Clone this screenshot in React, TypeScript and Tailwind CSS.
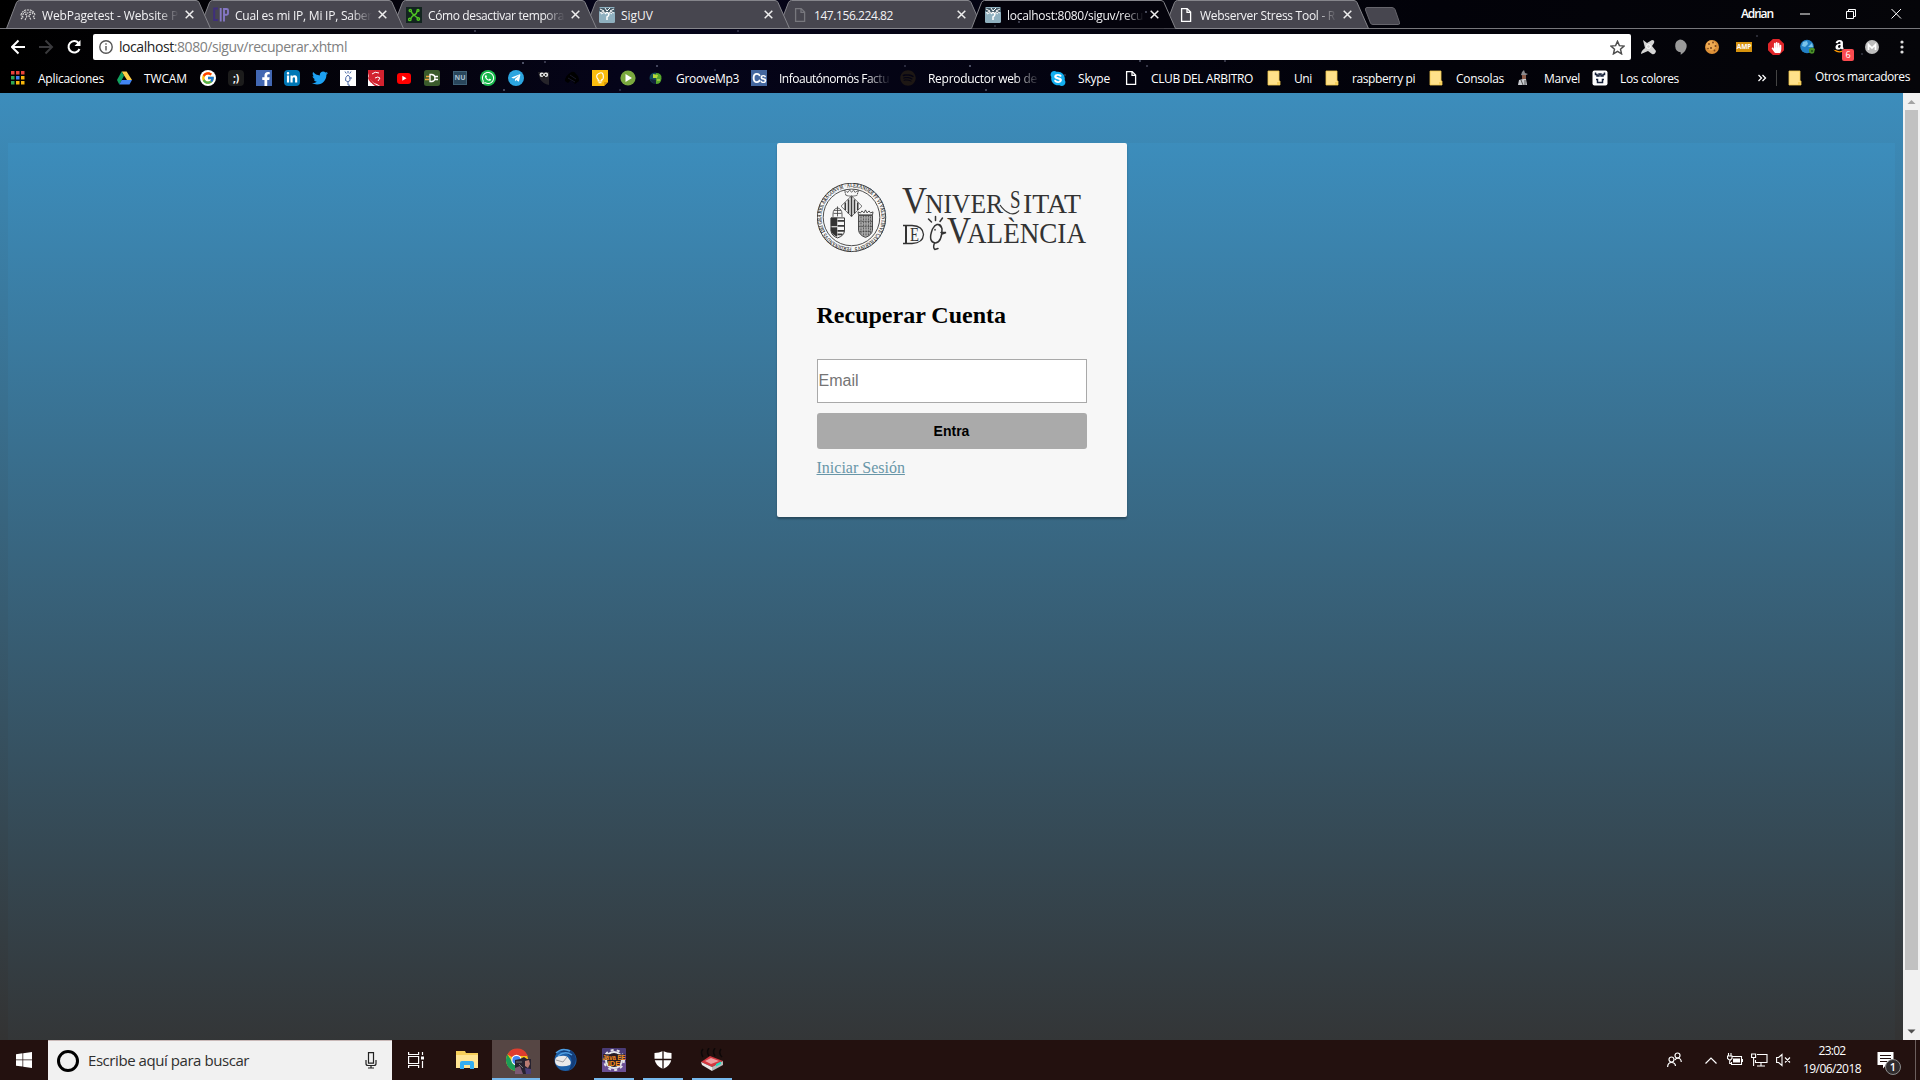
import React, { useLayoutEffect, useRef, useState } from "react";
import { FaFacebookF, FaLinkedinIn, FaTwitter, FaWhatsapp, FaTelegramPlane, FaSkype, FaHandPaper, FaAmazon, FaSpotify } from "react-icons/fa";
import { FcGoogle } from "react-icons/fc";

/* Text set to a known advance width by adjusting its tracking. */
function Fit({ w, className = "", children }: { w: number; className?: string; children: React.ReactNode }) {
  const ref = useRef<HTMLSpanElement>(null);
  const [ls, setLs] = useState(0);
  useLayoutEffect(() => {
    const el = ref.current;
    if (el && el.textContent) setLs((w - el.getBoundingClientRect().width) / el.textContent.length);
  }, [w]);
  return (
    <span ref={ref} className={"inline-block shrink-0 whitespace-pre " + className} style={{ letterSpacing: ls }}>
      {children}
    </span>
  );
}

const Page = ({ c = "#fff" }: { c?: string }) => (
  <svg width="16" height="16" viewBox="0 0 16 16" fill="none" stroke={c} strokeWidth="1.3">
    <path d="M3.6 1.6h5.6l3.4 3.5v9.3h-9z M9 1.8v3.6h3.5" />
  </svg>
);
const Uv = () => (
  <svg width="16" height="16" viewBox="0 0 16 16">
    <rect width="16" height="16" rx="1.5" fill="#8fb0bf" />
    <path d="M0 1h16v4l-4 1H3L0 4z" fill="#455b68" />
    <path d="M1 2l4 2-4 2M6 1l2 3 3-3M15 2l-4 2 4 2M2 7l4-2M13 7l-3-2" stroke="#fff" strokeWidth="1" fill="none" />
    <path d="M6 7q2-3 4 0-.2 2-2 3v3" stroke="#fff" strokeWidth="1.5" fill="none" />
  </svg>
);
const Folder = () => (
  <svg width="16" height="16" viewBox="0 0 16 16">
    <path d="M2 1h11v10h1v4H2z" fill="#ffe18a" />
    <path d="M2 1h11v10h1v4H2z" fill="none" stroke="#efc54c" strokeWidth=".8" />
    <path d="M11 15v-3h3v3z" fill="#f6cf5c" />
  </svg>
);

const TAB_ICONS = [
  <svg key="w" width="16" height="16" viewBox="0 0 16 16" fill="none" stroke="#ddd" strokeWidth="1.1" strokeDasharray="2 .8">
    <path d="M1 12l2-2-2-2q1-4 5-5h4q4 1 5 5l-2 2 2 2M3 8q0-3 3-3 1 2 4 0 3 0 3 3M5 13l2-4h2l2 4M5 7l2 1M11 7L9 8" />
  </svg>,
  <svg key="ip" width="16" height="16" viewBox="0 0 16 16" fill="none">
    <path d="M5 1.5H1.2v11.5H5" stroke="#3f2f7c" strokeWidth="2" />
    <path d="M7.7 1v13.5M11 14.5V2h2.7q1.3 0 1.3 1.3v3q0 1.5-1.3 1.5H11" stroke="#8577c4" strokeWidth="1.9" />
  </svg>,
  <svg key="g" width="16" height="16" viewBox="0 0 16 16" fill="none" stroke="#4fc323" strokeWidth="1.400">
    <rect width="16" height="16" fill="#12241f" stroke="none" />
    <path d="M5 4q1 3 3 4 3-1 3-4M8 8q-2 1-3.500 4M8 8q2 2 4 3" />
    <circle cx="4.300" cy="3.500" r="1.100" /><circle cx="12" cy="3.400" r="1" /><circle cx="3.800" cy="12.400" r="1.200" /><circle cx="12.300" cy="12" r="1.200" />
  </svg>,
  <Uv key="u" />,
  <Page key="p" c="#77777d" />,
  <Uv key="u2" />,
  <Page key="p2" />,
];
const TABS: [string, number][] = [
  ["WebPagetest - Website P", 136],
  ["Cual es mi IP, Mi IP, Saber", 137],
  ["Cómo desactivar tempora", 136],
  ["SigUV", 32],
  ["147.156.224.82", 79],
  ["localhost:8080/siguv/recu", 136],
  ["Webserver Stress Tool - R", 135],
];
const Z = ["z-[7]", "z-[6]", "z-[5]", "z-[4]", "z-[3]", "z-[9]", "z-[1]"];

function Tab({ i }: { i: number }) {
  const active = i === 5;
  const long = TABS[i][1] > 100;
  return (
    <div className={"relative -mr-3 h-[29px] w-[205px] shrink-0 " + Z[i]}>
      <svg className="absolute inset-0" width="205" height="29" viewBox="0 0 205 29">
        <path d="M.5 28.500L10.500 2.500Q11.500.5 13.500.5H190Q192 .5 193 2.500L204.500 28.500" fill={active ? "#04030c" : "#47464f"} stroke="#85858b" />
        {!active && <path d="M0 28.500h205" stroke="#85858b" />}
      </svg>
      <div className="relative flex h-[29px] items-center pb-px pl-3.5">
        <span className="mt-px w-4 shrink-0">{TAB_ICONS[i]}</span>
        <div className={"mb-px ml-1.5 w-[137px] shrink-0 " + (long ? "[mask-image:linear-gradient(90deg,#000_116px,transparent_137px)]" : "")}>
          <Fit w={TABS[i][1]} className="text-[12px] leading-4 text-[#f2f2f4]">{TABS[i][0]}</Fit>
        </div>
        <svg className="ml-1.5 mt-px shrink-0" width="9" height="9" viewBox="0 0 9 9" stroke="#eee" strokeWidth="1.500"><path d="M.7.7l7.600 7.600M8.300.7L.7 8.300" /></svg>
      </div>
    </div>
  );
}

const sq = "flex h-4 w-4 items-center justify-center overflow-hidden ";
const BOOKMARKS: { s: string; icon: React.ReactNode; t?: string; w?: number; fade?: boolean }[] = [
  { s: "w-[106px]", t: "Aplicaciones", w: 66, icon: (
    <svg width="16" height="16" viewBox="0 0 16 16">
      {["#e8433a", "#e8433a", "#e8433a", "#30a552", "#3f80ef", "#f5b50b", "#30a552", "#f5b50b", "#f5b50b"].map((c, i) => (
        <rect key={i} x={1 + (i % 3) * 5} y={1 + Math.floor(i / 3) * 5} width="3.500" height="3.500" fill={c} />
      ))}
    </svg>) },
  { s: "w-[84px]", t: "TWCAM", w: 43, icon: (
    <svg width="16" height="16" viewBox="0 0 16 16"><path d="M5.600 1.500h5L16 10h-5z" fill="#ffcf48" /><path d="M5.600 1.500L8 5.800 3.300 14.500 1 10z" fill="#12a15e" /><path d="M5.700 10H16l-2.500 4.500H3.300z" fill="#4285f4" /></svg>) },
  { s: "w-7", icon: <span className="flex h-4 w-4 items-center justify-center rounded-full bg-white"><FcGoogle size={14} /></span> },
  { s: "w-7", icon: <span className={sq + "rounded bg-[#1c1c1c] text-[10px] font-bold text-white"}>;)</span> },
  { s: "w-7", icon: <span className={sq + "items-end bg-[#4267b2] pl-1"}><FaFacebookF size={14} className="mt-1" color="#fff" /></span> },
  { s: "w-7", icon: <span className={sq + "rounded-sm bg-[#0077b5]"}><FaLinkedinIn size={12} color="#fff" /></span> },
  { s: "w-7", icon: <FaTwitter size={16} color="#1da1f2" /> },
  { s: "w-7", icon: (
    <svg width="16" height="16" viewBox="0 0 16 16" fill="none" stroke="#4a68a5"><rect width="16" height="16" fill="#fff" stroke="none" /><path d="M8 5q-3 2-2.500 5.500Q8 13 10 10.500 11 7 8 5zM8 12v3l2 .3M5 1.500l1.300 2M8 1v2.300M11 1.500L9.700 3.500M9 8h3" /></svg>) },
  { s: "w-7", icon: (
    <svg width="16" height="16" viewBox="0 0 16 16" fill="none"><rect width="16" height="16" fill="#d3222f" /><path d="M0 3q1 9 9 11l3 2H0z" fill="#fff" /><path d="M1 6q3 8 10 10H7Q1 12 0 8z" fill="#d3222f" /><path d="M4 4q3-3 7-1M7 8q3-2 5 0l-2 3M3 13l2 3" stroke="#fff" strokeWidth="1" /></svg>) },
  { s: "w-7", icon: (
    <svg width="16" height="16" viewBox="0 0 16 16"><rect x="1" y="3" width="14" height="11" rx="3" fill="#f00" /><path d="M6.300 5.700v5l4.200-2.500z" fill="#fff" /></svg>) },
  { s: "w-7", icon: (
    <svg width="16" height="16" viewBox="0 0 16 16" fill="none"><rect width="16" height="16" rx="2.500" fill="#3a5a2b" /><path d="M2 6.500h4M1 9.500h4" stroke="#e9a33a" strokeWidth="1.500" /><path d="M6 4.500h2q3 .5 3 3.500t-3 3.500H6zM10 6.500h4M10 9.500h4" stroke="#fff" strokeWidth="1.300" /></svg>) },
  { s: "w-7", icon: <span className="flex h-3.5 w-3.5 items-center justify-center border border-[#3f6177] bg-[#29465c] text-[7px] font-bold text-[#a9c0d0]">NU</span> },
  { s: "w-7", icon: <span className={sq + "rounded-full bg-[#18b84c]"}><FaWhatsapp size={14} color="#fff" /></span> },
  { s: "w-7", icon: <span className={sq + "rounded-full bg-[#2ca5e0]"}><FaTelegramPlane size={10} color="#fff" /></span> },
  { s: "w-7", icon: (
    <svg width="16" height="16" viewBox="0 0 16 16"><path d="M2 2h11v13q-6-1-9-6z" fill="#26242a" /><circle cx="5.800" cy="4.800" r="2.200" fill="#e9e9e9" /><circle cx="10" cy="4.800" r="2.200" fill="#e9e9e9" /><circle cx="6.200" cy="4.800" r=".9" /><circle cx="9.700" cy="4.800" r=".9" /><path d="M7 6h2l-1 2.500z" fill="#111" /></svg>) },
  { s: "w-7", icon: (
    <svg width="16" height="16" viewBox="0 0 16 16"><path d="M1 11q0-5 5-8 4-3 6 1 3 2 3 7l-4 3-4-4-3 3z" fill="#000" /><path d="M4 8l7 4M6 5l6 4" stroke="#18182a" /></svg>) },
  { s: "w-7", icon: (
    <svg width="16" height="16" viewBox="0 0 16 16" fill="none"><path d="M0 0h16v12l-4 4H0z" fill="#fbbc0d" /><path d="M12 16v-4h4z" fill="#dd9b09" /><path d="M6.200 9.500Q4.500 8 4.700 6T8 3t3.300 3T9.800 9.500V11H6.200zM6.500 12.800h3" stroke="#fff" strokeWidth="1.100" /></svg>) },
  { s: "w-7", icon: (
    <svg width="16" height="16" viewBox="0 0 16 16"><circle cx="8" cy="8" r="7.600" fill="#7aa83e" /><path d="M5.500 4v8l6.500-4z" fill="#fff" /></svg>) },
  { s: "w-[103px]", t: "GrooveMp3", w: 63, icon: (
    <svg width="16" height="16" viewBox="0 0 16 16"><circle cx="7" cy="8" r="5.500" fill="#134a5b" /><path d="M8 3q6 0 5.500 5.500T8 14z" fill="#55a52b" /><path d="M5 4l5 1-1 3-4 0z" fill="#b7d93a" /><path d="M9 10h3" stroke="#d9e45a" /><path d="M2 9q2 5 6 5V10z" fill="#13223c" /></svg>) },
  { s: "w-[149px]", t: "Infoautónomos Factu", w: 110, fade: true, icon: <span className={sq + "bg-[#44679f] font-['Liberation_Sans'] text-[12px] font-bold tracking-[-1px] text-white"}><span className="scale-y-125">Cs</span></span> },
  { s: "w-[150px]", t: "Reproductor web de", w: 109, fade: true, icon: <FaSpotify size={16} color="#1d1714" /> },
  { s: "w-[73px]", t: "Skype", w: 32, icon: <FaSkype size={17} color="#13aff0" className="[background:radial-gradient(#fff_50%,transparent_52%)]" /> },
  { s: "w-[143px]", t: "CLUB DEL ARBITRO", w: 102, icon: <Page /> },
  { s: "w-[58px]", t: "Uni", w: 18, icon: <Folder /> },
  { s: "w-[104px]", t: "raspberry pi", w: 63, icon: <Folder /> },
  { s: "w-[88px]", t: "Consolas", w: 48, icon: <Folder /> },
  { s: "w-[76px]", t: "Marvel", w: 36, icon: (
    <svg width="16" height="16" viewBox="0 0 16 16"><path d="M6 2l2-2 1 3 3 1-4 2-3-1z" fill="#8b8b8f" /><path d="M6 5h4v4H6z" fill="#8a5a48" /><path d="M2 15l1-5 4-1h3l1 6z" fill="#c9cbd0" /><path d="M5 10l2 5M9 10v5" stroke="#555" /></svg>) },
  { s: "w-[164px]", t: "Los colores", w: 59, icon: (
    <svg width="16" height="16" viewBox="0 0 16 16" fill="none"><rect x=".5" y=".5" width="15" height="15" rx="2" fill="#fff" /><path d="M3.500 2.500v2h1.500v1.500h2V4h2v2h2V4.500h1.500v-2M4 9.500h1.500v3h5v-3H12" stroke="#16213a" strokeWidth="1.500" /></svg>) },
];

const stars: [number, number, number][] = [[475, 31, .4], [523, 63, .6], [545, 62, .4], [504, 90, .5], [657, 66, .5], [620, 90, .3], [970, 66, .6], [1021, 24, .4], [986, 90, .5], [1140, 61, .5], [1225, 61, .4], [1147, 66, .4], [738, 31, .3], [1862, 54, .3], [1757, 36, .3], [850, 74, .4], [905, 66, .3], [715, 70, .3], [1065, 75, .3]];
const tabStars: [number, number, number][] = [[1019, 22, .5], [1146, 12, .6], [1010, 19, .3], [995, 26, .3], [1120, 20, .3]];

const Ext = () => (
  <div className="flex items-center gap-4">
    <svg width="16" height="16" viewBox="0 0 16 16"><path d="M3 1l4 3 5-3q3 0 2 3l-2 3 4 5q-1 4-4 3l-4-3-7 3q0-3 4-6z" fill="#d4d4d4" /><circle cx="8.500" cy="7.500" r="2" fill="none" stroke="#fff" /></svg>
    <svg width="16" height="16" viewBox="0 0 16 16"><path d="M8 .5a6.700 6.700 0 0 1 6.700 6.500q0 5-6 8.700v-2.500A6.500 6.500 0 0 1 8 .5z" fill="#9a9a9a" /></svg>
    <svg width="16" height="16" viewBox="0 0 16 16"><circle cx="8" cy="8" r="7" fill="#dd9138" /><circle cx="7" cy="6.500" r="5" fill="#efaa52" /><g fill="#7a431a"><circle cx="5" cy="5" r=".9" /><circle cx="9" cy="3.500" r=".9" /><circle cx="11.500" cy="7" r="1" /><circle cx="7" cy="9" r="1" /><circle cx="10.500" cy="11.500" r=".9" /><circle cx="4" cy="9.500" r=".8" /></g></svg>
    <span className="flex h-[10px] w-4 items-center justify-center bg-[#d7930d] text-[6.5px] font-bold text-white">AMP</span>
    <span className="flex h-4 w-4 items-center justify-center bg-[#e02529] [clip-path:polygon(30%_0,70%_0,100%_30%,100%_70%,70%_100%,30%_100%,0_70%,0_30%)]"><FaHandPaper size={11} color="#fff" /></span>
    <svg width="16" height="16" viewBox="0 0 16 16"><circle cx="7" cy="7.500" r="6.800" fill="#2280c4" /><path d="M3 3l4-1 1 3-3 3-3-1zM8 8l4-4 1 4z" fill="#79c3ea" /><path d="M9 10q3-3 6 0l-1 4q-3 2-5-1z" fill="#4b9129" /><path d="M11 12h2" stroke="#1c4b12" strokeWidth="1.500" /></svg>
    <span className="relative h-4 w-4">
      <FaAmazon size={15} color="#fff" className="[clip-path:inset(0_0_28%_0)]" />
      <svg className="absolute left-0.5 top-[11px]" width="12" height="4" viewBox="0 0 12 4" fill="none" stroke="#ff9900" strokeWidth="1.300"><path d="M.5 0q4 3 8 1" /></svg>
      <span className="absolute left-[10px] top-[10px] flex h-3 w-3 items-center justify-center rounded-[2px] bg-[#fb4b50] text-[9px] text-white">6</span>
    </span>
    <svg width="16" height="16" viewBox="0 0 16 16" fill="none"><circle cx="8" cy="8" r="7" fill="#bdbdbd" /><path d="M4.500 11V5.500L8 9l3.500-3.500V11" stroke="#fff" strokeWidth="1.700" /></svg>
  </div>
);

function Seal() {
  return (
    <g fill="none" stroke="#3b3b3b" transform="translate(-.5 -.6)">
      <defs><path id="ring" d="M35 65.200a30.200 30.200 0 1 1 .1 0" /></defs>
      <circle cx="35" cy="35" r="34.200" strokeWidth=".9" />
      <circle cx="35" cy="35" r="28.300" strokeWidth=".9" />
      <text fontSize="6" fontFamily="Liberation Serif" fill="#222" stroke="#222" strokeWidth=".12">
        <textPath href="#ring" textLength="186" lengthAdjust="spacingAndGlyphs">FERDINANDVS DEI GRA REX ARAGONVM · ALEXANDER PP VI VALENTINVS CATHARINVS</textPath>
      </text>
      <path d="M35 13.500l10.500 10.300L35 34 24.500 23.800z" strokeWidth=".7" />
      <path d="M32 17v14M35 14v20M38 17v14M28.800 20v7.500M41.200 20v7.500" strokeWidth="1.600" />
      <path d="M29.500 13L28 8l3.500 2L33 7.500l2 2.500 2-2.500 1.500 2.500L42 8l-1.500 5q-5.500 1.500-11 0z" strokeWidth=".9" strokeDasharray="1.500 .5" />
      <path d="M14.500 35.500h13.500v13q-.5 5-7 7-6-2-6.500-7z" strokeWidth="1" />
      <path d="M14.500 35.500h6v8h-6zM14.500 45h6v9q-5-2-6-6z" fill="#333" strokeWidth=".5" />
      <path d="M21 38.500h6.500M21 43.500h6.500M21 48.500h6.500M21 52h5" strokeWidth="1.800" />
      <path d="M16.500 34.500v-3q0-5 4.500-6 4.500 1 4.500 6v3M17 31h8M17.500 28h7M21 24v10" strokeWidth=".8" />
      <path d="M42 33h14v15q-1 5-7 7-6-2-7-7z" strokeWidth=".9" fill="#a8a8a8" />
      <path d="M44.500 34v18M47 33v21M49.500 33v21M52 33v21M54 34v18M42 39h14M42 44h14M43 49h12" strokeWidth=".7" strokeDasharray="2 1" />
      <path d="M42 32.500l-.5-3 2.500 1 1.500-2 2 2 1.500-3 1.500 3 2-2 1.500 2 2.500-1-.5 3z" strokeWidth=".9" />
    </g>
  );
}

function Logo() {
  const t = (x: number, y: number, s: number, w: number, txt: string) => (
    <text x={x} y={y} fontSize={s} textLength={w} lengthAdjust="spacingAndGlyphs">{txt}</text>
  );
  return (
    <svg width="270" height="70" viewBox="0 0 270 70" className="block">
      <Seal />
      <g fontFamily="Liberation Serif" fill="#333">
        {t(85, 30.300, 37, 25, "V")}
        {t(108, 30.300, 28, 78, "NIVER")}
        <path d="M183 22q4 6 10 8.500 6 1.500 9-3" fill="none" stroke="#333" strokeWidth="1.200" />
        {t(193, 25, 25, 10.500, "S")}
        {t(206, 30.300, 28, 58, "ITAT")}
        <path d="M86 42.500h9q11 .5 11.500 9-.5 8.500-11.500 9h-9" fill="none" stroke="#333" strokeWidth="1.300" />
        <path d="M89 42.500v18" stroke="#333" strokeWidth="2" />
        {t(93, 57.500, 18, 9, "E")}
        {t(130, 60.300, 37, 24, "V")}
        {t(150, 60.300, 28.500, 119, "ALÈNCIA")}
        <g fill="none" stroke="#333" strokeWidth="1.500" strokeLinecap="round">
          <path d="M124 44q-4-6-8.500 2-5 13 3 14 6.500-1 6.500-14-1-5-4-4.500M124 49.500h5l-4 1.500M117.500 60q-2 5 .5 6.500l3-1" />
          <path d="M118.500 33.500v4M111.500 36l3 3M125.500 35l-2.500 3.500M118 46.500v.5" />
        </g>
      </g>
    </svg>
  );
}

function TaskIcon({ on, hi, children }: { on?: boolean; hi?: boolean; children: React.ReactNode }) {
  return (
    <div className={"mr-px flex h-10 w-12 shrink-0 flex-col items-center justify-between " + (hi ? "bg-[#564644]" : "")}>
      <div className="flex h-[38px] items-center pt-0.5">{children}</div>
      {(on || hi) && <div className={"h-0.5 bg-[#76b9ed] " + (hi ? "w-12" : "w-10")} />}
    </div>
  );
}

export default function App() {
  return (
    <div className="flex h-[1080px] w-[1920px] flex-col overflow-hidden bg-black font-['Open_Sans','Noto_Sans',sans-serif]">
      <header className="relative h-[93px] shrink-0 bg-[linear-gradient(90deg,#000_0,#04030c_20%,#05041a_33%,#03030e_60%,#020209_75%,#050509_100%)]">
        <svg className="absolute inset-0" width="1920" height="93">
          {stars.map(([x, y, o], i) => <circle key={i} cx={x} cy={y} r="1" fill="#a9b0cc" opacity={o} />)}
        </svg>
        <div className="relative flex h-[29px] border-b border-[#77777b] pl-1.5">
          {TABS.map((_, i) => <Tab key={i} i={i} />)}
          <svg className="absolute inset-0 z-10" width="1400" height="28">
            {tabStars.map(([x, y, o], i) => <circle key={i} cx={x} cy={y} r=".9" fill="#a9b0cc" opacity={o} />)}
          </svg>
          <svg className="ml-[7px] mt-[7px] shrink-0" width="38" height="18" viewBox="0 0 38 18"><path d="M3 .5h25q2 0 3 2l4.500 13q.5 2-1 2H9q-2 0-2.500-1.500L1.500 3Q1 .5 3 .5z" fill="#47464f" stroke="#66656c" /></svg>
          <div className="ml-auto flex h-[28px] items-center">
            <Fit w={32} className="mr-[26px] text-[12px] font-semibold leading-4 text-white">Adrian</Fit>
            <svg className="-mr-px" width="122" height="12" viewBox="0 0 122 12" fill="none" stroke="#fff">
              <path d="M1 6h10M47.500 3.500h7v7h-7zM49.500 3.500v-2h7v7h-2M92.500 1l9.500 9.500M102 1l-9.500 9.500" />
            </svg>
          </div>
        </div>
        <div className="relative flex h-[36px] items-center pl-[11px]">
          <svg width="72" height="16" viewBox="0 0 72 16" fill="none" stroke="#fff" strokeWidth="2">
            <path d="M14 8H1.500M7.500 1.500L1 8l6.500 6.500" />
            <path d="M28 8h12.500M34.500 1.500L41 8l-6.500 6.500" stroke="#3a3a3d" />
            <path d="M67.500 4A5.700 5.700 0 1 0 68.500 10" /><path d="M69.500 1v6h-6z" fill="#fff" stroke="none" />
          </svg>
          <div className="ml-2.5 flex h-[26px] w-[1538px] items-center rounded-[2px] bg-white pl-1.5">
            <svg width="14" height="14" viewBox="0 0 14 14" fill="none" stroke="#555" strokeWidth="1.400"><circle cx="7" cy="7" r="6.200" /><path d="M7 6v4.500M7 3.300v1.500" /></svg>
            <Fit w={228} className="ml-1.5 text-[14px] leading-5 text-[#808080]"><span className="text-[#222]">localhost</span>:8080/siguv/recuperar.xhtml</Fit>
            <svg className="ml-auto mr-1.5" width="15" height="15" viewBox="0 0 24 24" fill="none" stroke="#4c4c4c" strokeWidth="2.300"><path d="M12 2l3 7 7.500.7-5.700 5 1.700 7.500L12 18.200l-6.500 4 1.700-7.500-5.700-5L9 9z" /></svg>
          </div>
          <div className="ml-[9px]"><Ext /></div>
          <svg className="ml-[20px]" width="4" height="14" viewBox="0 0 4 14" fill="#ddd"><circle cx="2" cy="2" r="1.600" /><circle cx="2" cy="7" r="1.600" /><circle cx="2" cy="12" r="1.600" /></svg>
        </div>
        <div className="relative flex h-[26px] items-center pl-2.5">
          {BOOKMARKS.map((b, i) => (
            <div key={i} className={"flex shrink-0 items-center " + b.s}>
              <span className="flex w-4 shrink-0 justify-center">{b.icon}</span>
              {b.t && (
                <div className={"mb-0.5 ml-3 " + (b.fade ? "w-[112px] shrink-0 [mask-image:linear-gradient(90deg,#000_86px,transparent_112px)]" : "")}>
                  <Fit w={b.w!} className="text-[12px] leading-4 text-white">{b.t}</Fit>
                </div>
              )}
            </div>
          ))}
          <svg width="10" height="8" viewBox="0 0 10 8" fill="none" stroke="#fff" strokeWidth="1.300" className="ml-px"><path d="M1.500 1l3 3-3 3M5.500 1l3 3-3 3" /></svg>
          <span className="ml-[9px] h-4 w-px bg-[#444]" />
          <span className="ml-2.5"><Folder /></span>
          <Fit w={95} className="mb-0.5 ml-3 text-[12px] leading-4 text-white">Otros marcadores</Fit>
        </div>
      </header>

      <div className="flex h-[947px] shrink-0">
        <main className="h-[947px] w-[1903px] overflow-hidden bg-[linear-gradient(#3c8dbc,#333)] px-2 pt-[50px]">
          <div className="h-[925px] bg-[linear-gradient(#3c8dbc,#333)]">
            <div className="mx-auto h-[374px] w-[350px] rounded-[2px] bg-[#f7f7f7] p-10 shadow-[0_2px_2px_rgba(0,0,0,0.3)]">
              <Logo />
              <h2 className="mt-[48px] font-['Liberation_Serif',serif] text-[24px] font-bold leading-7 text-black">Recuperar Cuenta</h2>
              <div className="mt-[30px] flex h-11 items-center border border-[#a9a9a9] bg-white pl-px font-['Liberation_Sans',sans-serif] text-[16px] leading-5 text-[#757575]">Email</div>
              <button className="mt-2.5 block h-9 w-full rounded-[3px] bg-[#aaa] font-['Liberation_Sans',sans-serif] text-[14px] font-bold text-black">Entra</button>
              <a className="mt-2.5 block font-['Liberation_Serif',serif] text-[16px] leading-[18px] text-[#6896a8] underline">Iniciar Sesión</a>
            </div>
          </div>
        </main>
        <aside className="flex w-[17px] flex-col items-center bg-[#f1f1f1]">
          <svg width="17" height="17" viewBox="0 0 17 17" fill="#a3a3a3"><path d="M8.500 7l4 4h-8z" /></svg>
          <div className="h-[860px] w-[13px] bg-[#c1c1c1]" />
          <svg className="mt-auto" width="17" height="17" viewBox="0 0 17 17" fill="#505050"><path d="M8.500 10.500l-4-4h8z" /></svg>
        </aside>
      </div>

      <footer className="flex h-10 shrink-0 bg-[#23110f] text-white">
        <div className="flex w-12 items-center justify-center">
          <svg width="16" height="16" viewBox="0 0 16 16" fill="#fff"><path d="M0 2.200l6.500-.9v6.300H0zM7.200 1.200L16 0v7.600H7.200zM0 8.300h6.500v6.300L0 13.700zM7.200 8.300H16V16l-8.800-1.200z" /></svg>
        </div>
        <div className="flex w-[344px] items-center border-t border-[#c9b9b8] bg-[#f1f1f1] pl-[9px] pr-3.5">
          <span className="h-[22px] w-[22px] rounded-full border-[3px] border-black" />
          <Fit w={161} className="mb-px ml-[9px] text-[15px] leading-5 text-[#2f2f2f]">Escribe aquí para buscar</Fit>
          <svg className="ml-auto mr-px" width="12" height="17" viewBox="0 0 12 17" fill="none" stroke="#222" strokeWidth="1.200"><path d="M3.500.6h5v10.500h-5zM1 8v3.500q0 2 2 2h6q2 0 2-2V8M6 13.500V16M3 16h6" /></svg>
        </div>
        <TaskIcon>
          <svg width="16" height="16" viewBox="0 0 16 16" fill="none" stroke="#fff" strokeWidth="1.200"><path d="M.6 0v2.500h10V0M.6 16v-2.500h10V16M.6 4.500h10v7H.6zM14.500 0v3M14.500 9v7" /><path d="M13 4.500h3v3h-3z" fill="#fff" stroke="none" /></svg>
        </TaskIcon>
        <div className="ml-0.5 flex">
        <TaskIcon>
          <svg width="22" height="20" viewBox="0 0 22 20"><path d="M0 1h9l1 2h12v15H0z" fill="#f6cf5a" /><path d="M0 5h22v13H0z" fill="#ffe593" /><path d="M4 19v-6q0-2 2-2h10q2 0 2 2v6h-4v-4H8v4z" fill="#33aef0" /></svg>
        </TaskIcon>
        <TaskIcon hi>
          <svg className="ml-1 mt-0.5" width="26" height="26" viewBox="0 0 26 26">
            <circle cx="12" cy="12" r="11" fill="#fbc116" /><path d="M12 12L2.500 6.500a11 11 0 0 1 19.500 0L23 8H12z" fill="#df3d2f" /><path d="M2.500 6.500L8 15l6 0-3.500 8A11 11 0 0 1 2.500 6.500z" fill="#1b9d57" />
            <circle cx="11.500" cy="12" r="5.200" fill="#fff" /><circle cx="11.500" cy="12" r="4.100" fill="#4285f4" />
            <path d="M10 12l5-1 4-2 3 2 4 0v15H10z" fill="#27222f" /><path d="M20 13l4-1 1 4-2 4-3-2z" fill="#b97b72" /><path d="M10 20l5-2 3 8h-8z" fill="#7c5a72" /><path d="M20 20l6 1v5h-5z" fill="#4b3f78" /><path d="M11 14h6M14 16l4 4" stroke="#777" />
          </svg>
        </TaskIcon>
        <TaskIcon>
          <svg width="24" height="24" viewBox="0 0 24 24"><circle cx="12.500" cy="12" r="11" fill="#1c5fa8" /><path d="M12 1q10 1 11 10-1 9-8 12 5-7 3-13-3-6-11-6z" fill="#123d7a" /><path d="M3 5q6-6 14-2M5 8q7-6 14-1" stroke="#4f9de0" fill="none" strokeWidth="1.500" /><path d="M2 13q0-5 6-5 6-1 8 3 3 3 1 6-5 2-11 1-4-1-4-5z" fill="#e9e9ea" /><path d="M3 12l7 2 4-5" stroke="#9d9da3" fill="none" /></svg>
        </TaskIcon>
        <TaskIcon on>
          <svg width="24" height="24" viewBox="0 0 24 24">
            <rect width="24" height="24" rx="1" fill="#4a3b77" /><path d="M0 14h24v10H0z" fill="#6a4f94" />
            <circle cx="12" cy="12" r="8" fill="#1b1824" stroke="#e4e4e8" strokeWidth="2.200" /><circle cx="12" cy="12" r="10" fill="none" stroke="#e4e4e8" strokeWidth="2" strokeDasharray="3 3.200" />
            <path d="M1 6h22v6H1zM6 12h12v6H6z" fill="#2b1c22" opacity=".75" />
            <g fill="#f58d1b" fontFamily="Liberation Sans" fontWeight="bold" textAnchor="middle"><text x="12" y="11.500" fontSize="7" textLength="23" lengthAdjust="spacingAndGlyphs">Java EE</text><text x="12" y="18" fontSize="7.500">IDE</text></g>
          </svg>
        </TaskIcon>
        <TaskIcon on>
          <svg width="18" height="18" viewBox="0 0 18 18"><path d="M9 0q4 2 8.500 2v6q-1 7-8.500 10Q1.500 15 .5 8V2Q5 2 9 0z" fill="#fff" /><path d="M9 0v18M0 8.500h18" stroke="#23110f" strokeWidth="1.300" /></svg>
        </TaskIcon>
        <TaskIcon on>
          <svg width="24" height="24" viewBox="0 0 24 24"><path d="M3 9Q0 4 3 1M9 8q-3-4 0-8M15 8q-3-4 0-8M22 9q-4-4-1-8" stroke="#0d0808" fill="none" strokeWidth="1.500" /><path d="M1 14l9-6 13 5-11 6z" fill="#d43840" /><path d="M5 13l6-3 8 3-8 3z" fill="#eda0a2" /><path d="M1 14l11 5v4L2 17z" fill="#e8e8e8" /><path d="M12 19l11-6v4l-11 6z" fill="#b8b8b8" /><path d="M16 16l5-2.500v2.500L16 18.500z" fill="#21dfc1" /></svg>
        </TaskIcon>
        </div>

        <div className="ml-auto flex items-center">
          <svg className="mr-[23px]" width="15" height="16" viewBox="0 0 15 16" fill="none" stroke="#fff" strokeWidth="1.200"><circle cx="10.500" cy="3.500" r="2.500" /><circle cx="4.500" cy="7.500" r="2.500" /><path d="M.6 15q.2-4.500 3.900-4.500T8.500 14M8 8q1-2 3-2 3 .5 3.300 4" /></svg>
          <svg className="mr-2.5" width="12" height="7" viewBox="0 0 12 7" fill="none" stroke="#fff" strokeWidth="1.200"><path d="M.5 6.500L6 1l5.500 5.500" /></svg>
          <svg className="mr-2" width="16" height="14" viewBox="0 0 16 14" fill="none" stroke="#fff" strokeWidth="1.100"><path d="M5 3.500h9.500v8H4.500V9M1.500 0v3M4 0v3M.5 3h4.500v2.500L3 7.500.5 5.500zM2.700 7v3.500h2" /><path d="M6 5.500h7v4H6zM15 6h1v3h-1z" fill="#fff" stroke="none" /></svg>
          <svg className="mr-2" width="17" height="14" viewBox="0 0 17 14" fill="none" stroke="#fff" strokeWidth="1.100"><path d="M6 1.500h10v8H4.500V7M10 9.500v3M6 13h8M.6 1h4v3.500h-4zM2.600 4.500V13" /></svg>
          <svg className="mr-[11px]" width="15" height="14" viewBox="0 0 15 14" fill="none" stroke="#fff" strokeWidth="1.100"><path d="M.6 4.500h2L6 1.500v11L2.600 9.500h-2zM9 4.500l5 5M14 4.500l-5 5" /></svg>
          <div className="mr-[15px] flex w-[60px] flex-col items-center text-[12px] leading-[18px]">
            <Fit w={27}>23:02</Fit>
            <Fit w={58}>19/06/2018</Fit>
          </div>
          <div className="relative mr-[14px] h-6 w-6">
            <svg className="mt-1" width="17" height="17" viewBox="0 0 17 17"><path d="M.5 0h16v13H9l-3 3.500V13H.5z" fill="#fff" /><path d="M3 3.500h11M3 6.500h11M3 9.500h7" stroke="#23110f" strokeWidth="1.200" /></svg>
            <span className="absolute left-[8px] top-[11px] flex h-4 w-4 items-center justify-center rounded-full border border-[#8c8c8c] bg-[#302c2d] text-[11px] font-semibold">1</span>
          </div>
          <span className="mr-1 h-10 w-px bg-[#6c5f5d]" />
        </div>
      </footer>
    </div>
  );
}
